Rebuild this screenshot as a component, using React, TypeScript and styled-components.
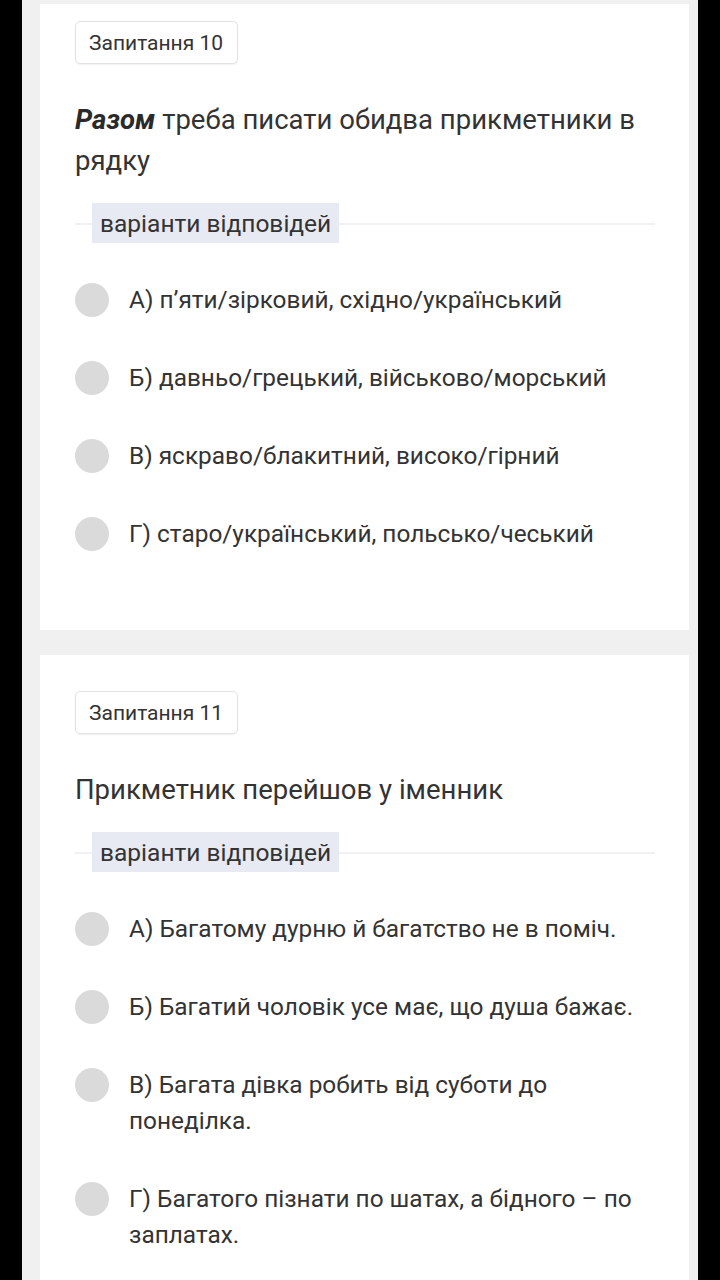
import React from "react";
import styled, { createGlobalStyle } from "styled-components";

const Global = createGlobalStyle`
  html, body { margin: 0; padding: 0; background: #000; }
  body { font-family: Roboto, "Noto Sans", "Liberation Sans", sans-serif; }
  * { box-sizing: border-box; }
`;

const Screen = styled.div`
  margin: 0 22px;
  background: #f0f0f0;
  padding: 4px 9px 0 18px;
  display: flex;
  flex-direction: column;
  gap: 25px;
  overflow: hidden;
  height: 1280px;
`;

const Card = styled.section<{ $top: number }>`
  background: #fff;
  padding: ${(p) => p.$top}px 34px 57px 35px;
  display: flex;
  flex-direction: column;
  align-items: flex-start;
  flex-shrink: 0;
`;

const Badge = styled.div`
  height: 43px;
  padding: 0 14px 0 13px;
  display: flex;
  align-items: center;
  border: 1px solid #e2e2e2;
  border-radius: 5px;
  box-shadow: 0 1px 2px rgba(0, 0, 0, 0.06);
  font-size: 21px;
  color: #333;
`;

const Question = styled.p`
  margin: 35px 0 0;
  font-size: 27.5px;
  line-height: 41px;
  color: #333;
  width: 100%;
  b {
    font-weight: 700;
    font-style: italic;
    color: #2a2a2a;
  }
`;

const Divider = styled.div`
  margin-top: 22px;
  width: 100%;
  display: flex;
  align-items: center;
  position: relative;
  &::before {
    content: "";
    position: absolute;
    left: 0;
    right: 0;
    top: 50%;
    height: 2px;
    background: #f1f1f1;
  }
`;

const Chip = styled.span`
  position: relative;
  margin-left: 17px;
  height: 40px;
  padding: 0 8px;
  display: flex;
  align-items: center;
  background: #e8eaf3;
  font-size: 24.5px;
  color: #333;
`;

const Options = styled.div`
  margin-top: 18px;
  width: 100%;
  display: flex;
  flex-direction: column;
`;

const Option = styled.div`
  display: flex;
  align-items: flex-start;
  gap: 20px;
  padding: 21px 0;
`;

const Radio = styled.span`
  flex: 0 0 34px;
  width: 34px;
  height: 34px;
  margin-top: 1px;
  border-radius: 50%;
  background: #dadada;
`;

const OptionText = styled.span`
  font-size: 24.4px;
  line-height: 36px;
  color: #333;
`;

const q10 = [
  "А) п’яти/зірковий, східно/український",
  "Б) давньо/грецький, військово/морський",
  "В) яскраво/блакитний, високо/гірний",
  "Г) старо/український, польсько/чеський",
];

const q11 = [
  "А) Багатому дурню й багатство не в поміч.",
  "Б) Багатий чоловік усе має, що душа бажає.",
  "В) Багата дівка робить від суботи до понеділка.",
  "Г) Багатого пізнати по шатах, а бідного – по заплатах.",
];

const OptionList = ({ items }: { items: string[] }) => (
  <Options>
    {items.map((t) => (
      <Option key={t}>
        <Radio />
        <OptionText>{t}</OptionText>
      </Option>
    ))}
  </Options>
);

export default function App() {
  return (
    <>
      <Global />
      <Screen>
        <Card $top={17}>
          <Badge>Запитання 10</Badge>
          <Question>
            <b>Разом</b> треба писати обидва прикметники в рядку
          </Question>
          <Divider>
            <Chip>варіанти відповідей</Chip>
          </Divider>
          <OptionList items={q10} />
        </Card>
        <Card $top={36}>
          <Badge>Запитання 11</Badge>
          <Question>Прикметник перейшов у іменник</Question>
          <Divider>
            <Chip>варіанти відповідей</Chip>
          </Divider>
          <OptionList items={q11} />
        </Card>
      </Screen>
    </>
  );
}
